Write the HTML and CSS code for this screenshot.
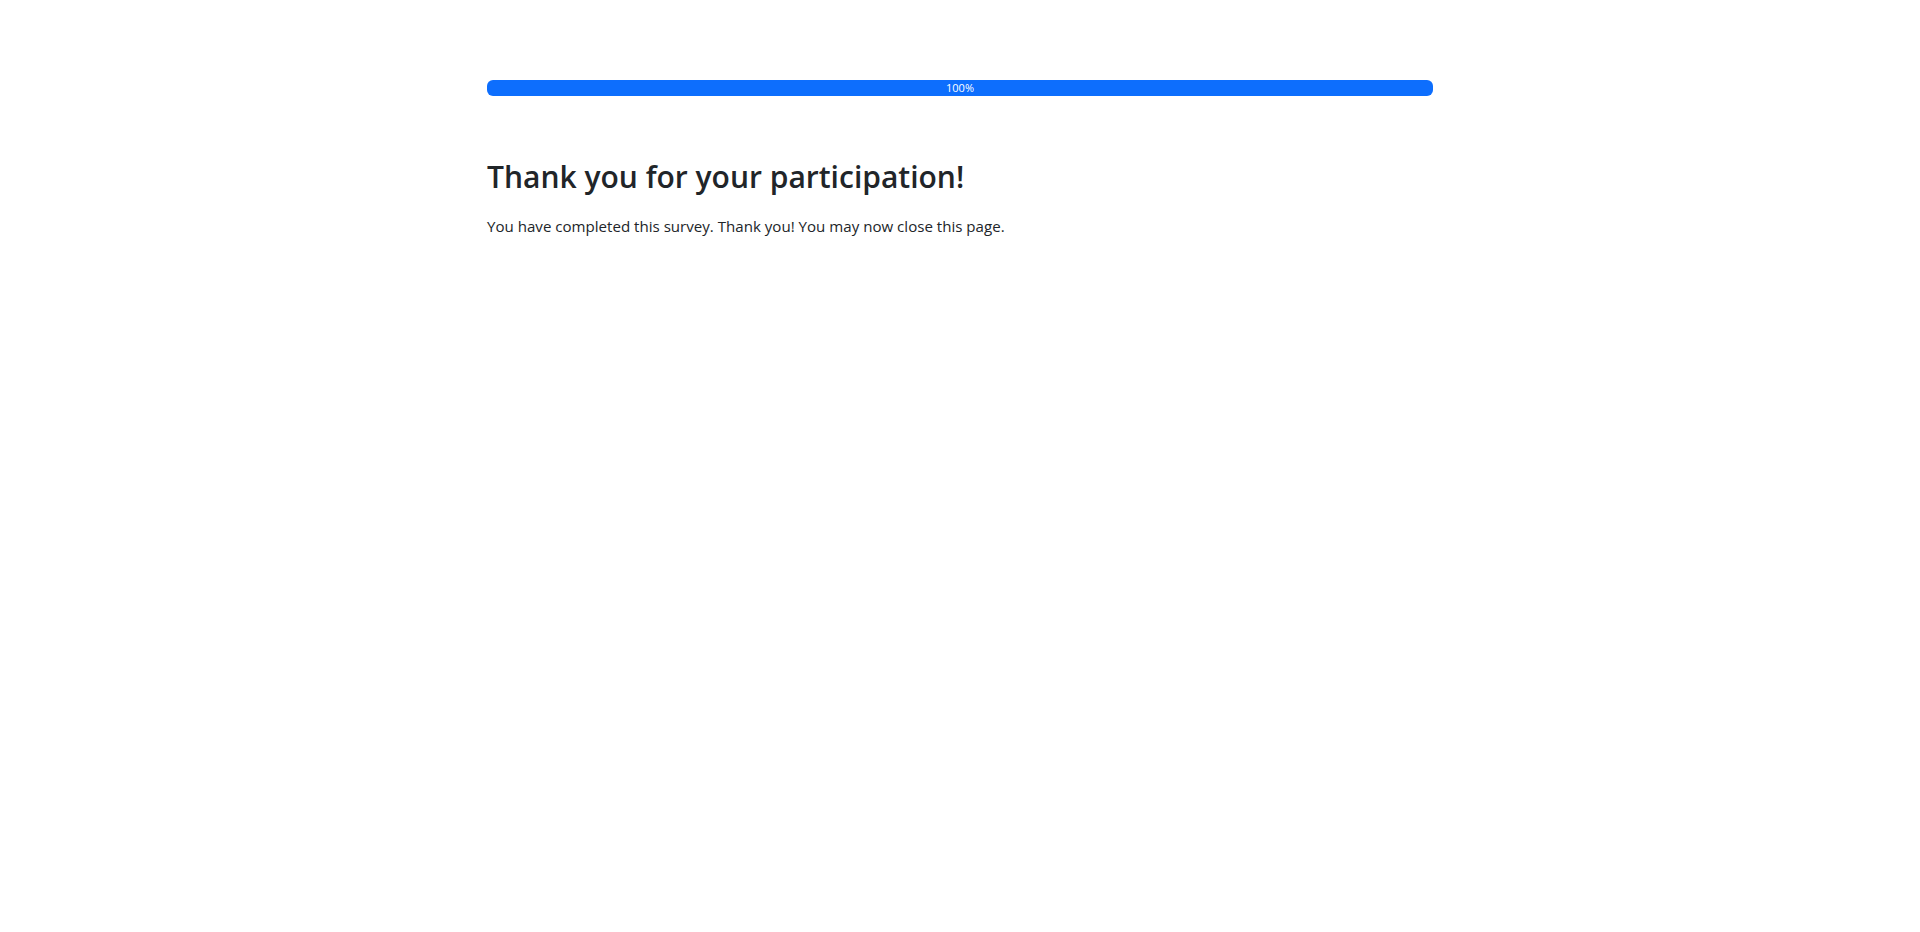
FILE: index.html
```html
<!DOCTYPE html>
<html lang="en">

<head>
    <meta charset="UTF-8">
    <meta name="viewport" content="width=device-width, initial-scale=1.0">
    <title>Survey Complete</title>
    <link rel="stylesheet" href="styles.css">
</head>

<body>

    <main class="survey">
        <!-- Progress -->
        <div class="progress">
            <div class="progress-bar" style="width: 100%">100%</div>
        </div>

        <!-- Finished message -->
        <section class="finish">
            <h2>Thank you for your participation!</h2>
            <p>You have completed this survey. Thank you! You may now close this page.</p>
        </section>
    </main>

</body>

</html>
```

FILE: styles.css
```css
/* General Styles */
body {
    font-family: "Open Sans", "Noto Sans", Arial, sans-serif;
    font-size: 16px;
    line-height: 1.5;
    color: #212529;
    background-color: #fff;
    margin: 0;
    padding: 0;
}

.survey {
    max-width: 946px;
    margin: 0 auto;
    padding-top: 80px;
}

/* Progress Bar */
.progress {
    display: flex;
    height: 16px;
    background-color: #e9ecef;
    border-radius: 6px;
    overflow: hidden;
    margin-bottom: 63px;
}

.progress-bar {
    display: flex;
    justify-content: center;
    align-items: center;
    background-color: #0d6efd;
    color: #fff;
    font-size: 11px;
    white-space: nowrap;
}

/* Finish Message */
.finish h2 {
    font-size: 30px;
    font-weight: 600;
    line-height: 1.2;
    margin: 0 0 20px;
}

.finish p {
    font-size: 15.1px;
    margin: 0;
}
```
